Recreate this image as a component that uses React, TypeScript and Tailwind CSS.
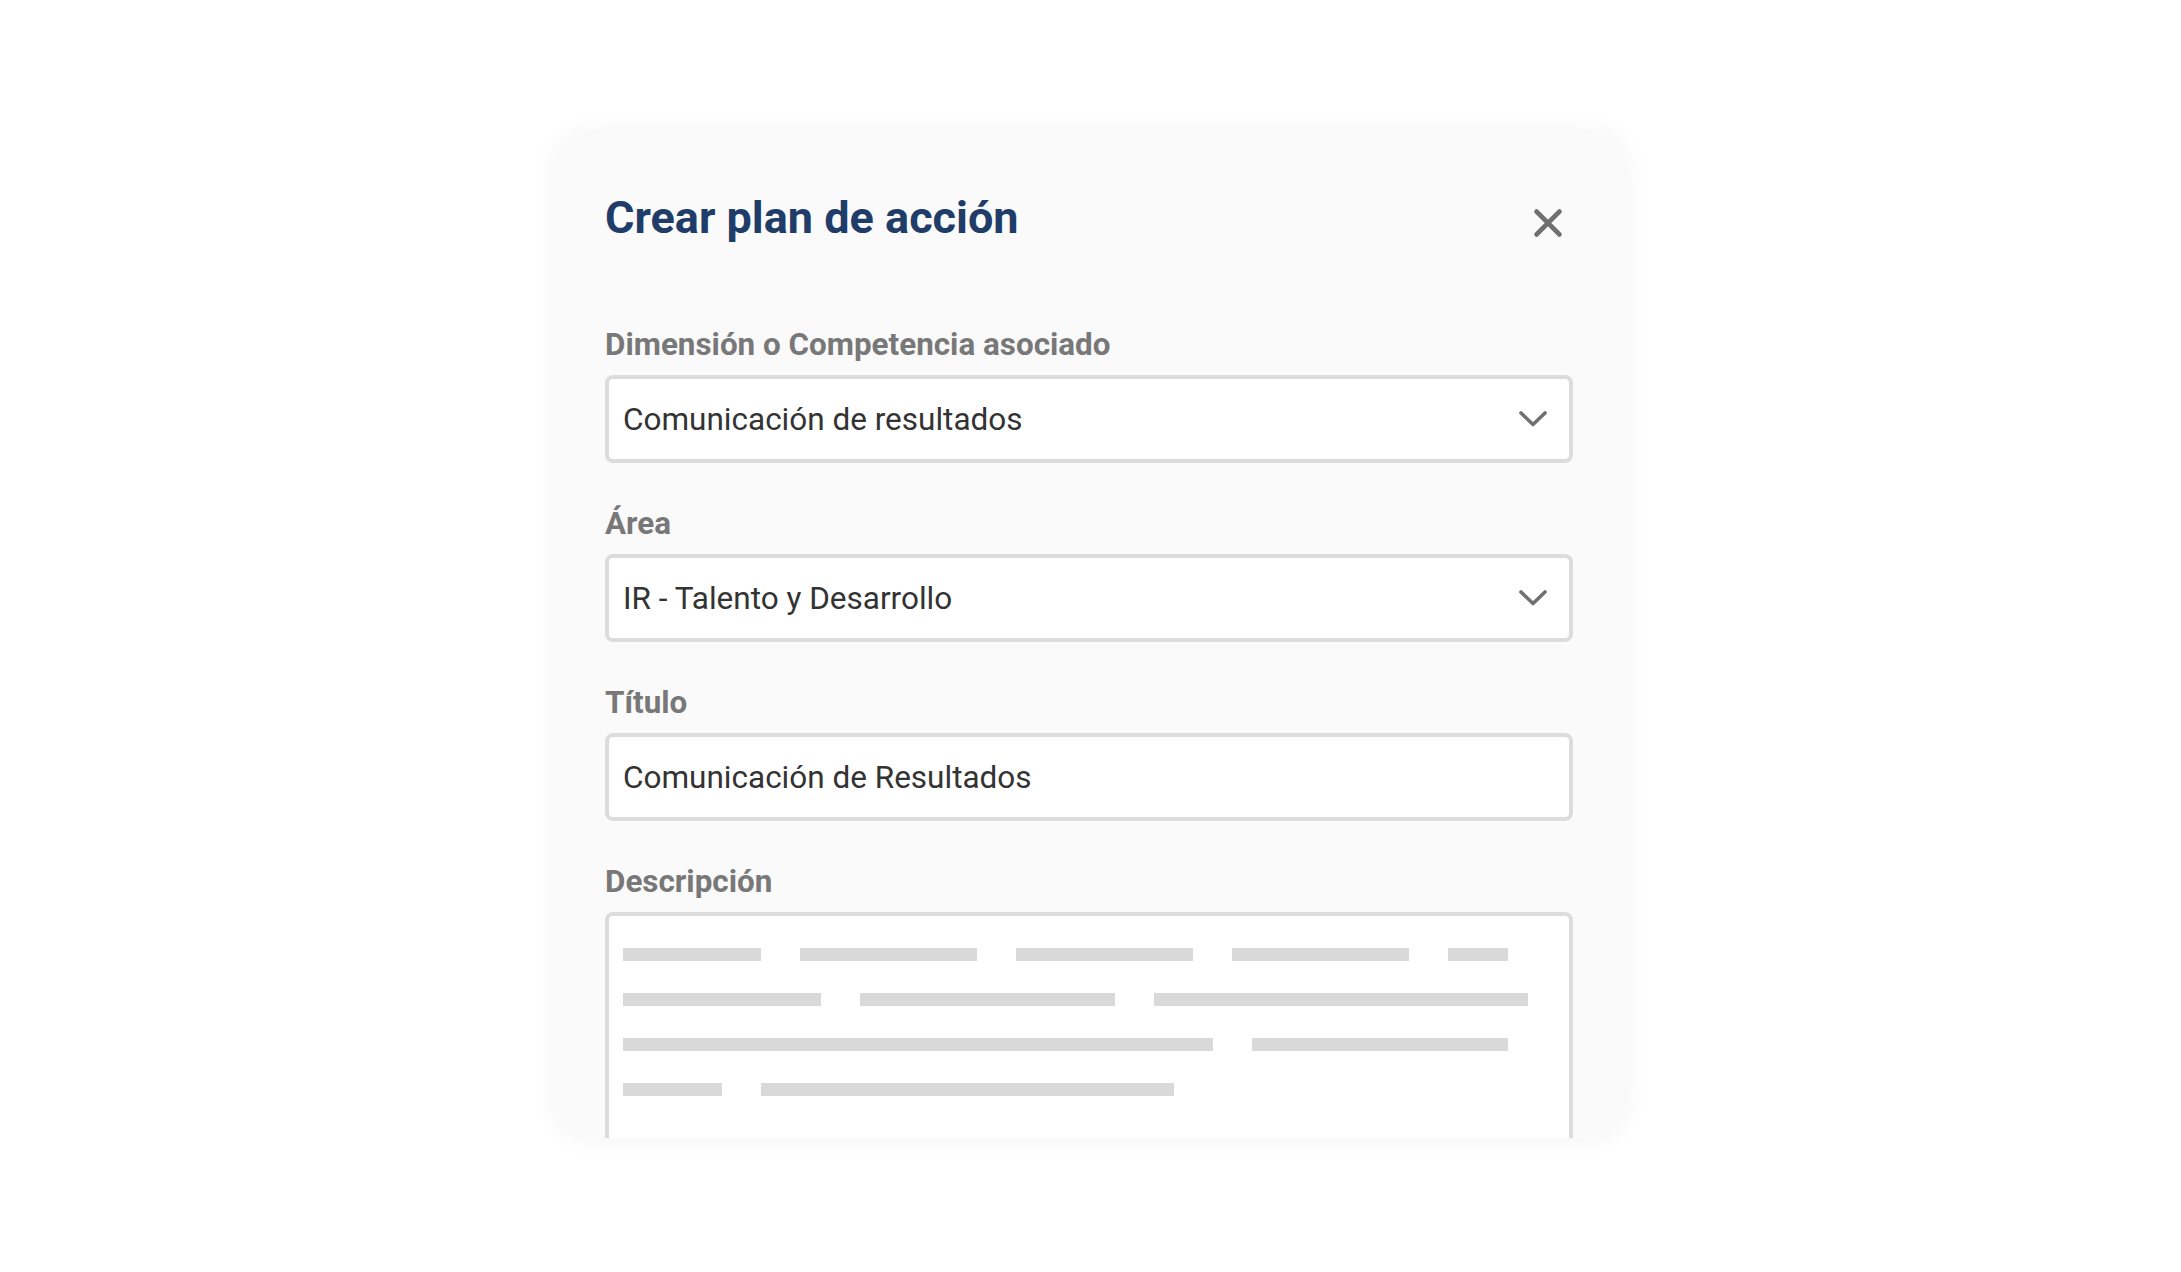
import React from "react";

type Field = { label: string; value: string; select?: boolean };

const fields: Field[] = [
  { label: "Dimensión o Competencia asociado", value: "Comunicación de resultados", select: true },
  { label: "Área", value: "IR - Talento y Desarrollo", select: true },
  { label: "Título", value: "Comunicación de Resultados" },
];

// Placeholder bars drawn inside the description box (widths in px)
const descriptionRows: number[][] = [
  [138, 177, 177, 177, 60],
  [198, 255, 374],
  [590, 256],
  [99, 413],
];

function CloseIcon() {
  return (
    <svg width="30" height="30" viewBox="0 0 30 30" fill="none">
      <path d="M3.6 3.6L26.4 26.4M26.4 3.6L3.6 26.4" stroke="#6f6f6f" strokeWidth="4.8" strokeLinecap="round" />
    </svg>
  );
}

function Chevron() {
  return (
    <svg width="28" height="16" viewBox="0 0 28 16" fill="none">
      <path d="M2 2L14 13.5L26 2" stroke="#707070" strokeWidth="3.6" strokeLinecap="round" strokeLinejoin="round" />
    </svg>
  );
}

function FieldLabel({ children }: { children: React.ReactNode }) {
  return <div className="text-[31.4px] leading-[36px] font-bold text-[#787878]">{children}</div>;
}

export default function App() {
  return (
    <div
      className="min-h-screen w-full bg-white flex justify-center pt-[132px]"
      style={{ fontFamily: "Roboto, 'Noto Sans', 'Liberation Sans', sans-serif" }}
    >
      <div className="w-[1073px] h-[1006px] rounded-[36px] bg-[#fafafa] shadow-[0_0_26px_rgba(0,0,0,0.05)] overflow-hidden pl-[51px] pt-[60px] flex flex-col">
        <div className="w-[968px] flex flex-col flex-1">
          {/* Header */}
          <div className="flex items-start justify-between">
            <h1 className="text-[45px] leading-[52px] font-bold text-[#1f3d68]">
              Crear plan de acción
            </h1>
            <button className="mt-[16px] mr-[10px] w-[30px] h-[30px] flex items-center justify-center">
              <CloseIcon />
            </button>
          </div>

          {/* Form fields */}
          <div className="mt-[83px] flex flex-col gap-[43px]">
            {fields.map((f) => (
              <div key={f.label} className="flex flex-col gap-[12px]">
                <FieldLabel>{f.label}</FieldLabel>
                <div className="h-[88px] border-4 border-[#dcdcdc] rounded-[8px] bg-white flex items-center justify-between pl-[14px] pr-[22px]">
                  <span className="pt-[2px] text-[31.5px] leading-[38px] text-[#333333]">{f.value}</span>
                  {f.select && <Chevron />}
                </div>
              </div>
            ))}
          </div>

          {/* Description */}
          <div className="mt-[43px] flex flex-col gap-[12px] flex-1">
            <FieldLabel>Descripción</FieldLabel>
            <div className="flex-1 border-4 border-b-0 border-[#dcdcdc] rounded-t-[8px] bg-white pt-[32px] pl-[14px] flex flex-col gap-[32px]">
              {descriptionRows.map((row, i) => (
                <div key={i} className="flex gap-[39px]">
                  {row.map((w, j) => (
                    <div key={j} className="h-[13px] bg-[#d9d9d9]" style={{ width: w }} />
                  ))}
                </div>
              ))}
            </div>
          </div>
        </div>
      </div>
    </div>
  );
}
